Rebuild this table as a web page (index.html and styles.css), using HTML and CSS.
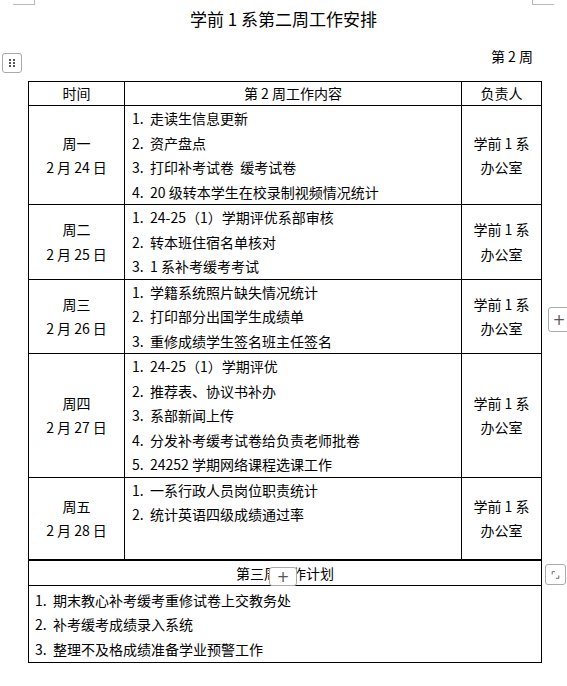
FILE: index.html
```html
<!DOCTYPE html>
<html lang="zh-CN">
<head>
<meta charset="utf-8">
<title>学前1系第二周工作安排</title>
<link rel="stylesheet" href="styles.css">
</head>
<body>
<div class="page">
  <span class="corner corner-tl"></span>
  <span class="corner corner-tr"></span>

  <h1 class="title">学前 1 系第二周工作安排</h1>
  <div class="week">第 2 周</div>

  <div class="move-handle">
    <svg width="8" height="10" viewBox="0 0 8 10"><g fill="#555"><rect x="1" y="1" width="2" height="2"/><rect x="5" y="1" width="2" height="2"/><rect x="1" y="4" width="2" height="2"/><rect x="5" y="4" width="2" height="2"/><rect x="1" y="7" width="2" height="2"/><rect x="5" y="7" width="2" height="2"/></g></svg>
  </div>

  <table class="plan">
    <colgroup>
      <col class="c-time">
      <col class="c-content">
      <col class="c-owner">
    </colgroup>
    <thead>
      <tr class="head">
        <th>时间</th>
        <th>第 2 周工作内容</th>
        <th>负责人</th>
      </tr>
    </thead>
    <tbody>
      <tr>
        <td class="day">周一<br>2 月 24 日</td>
        <td class="items">
          <div class="item"><span class="num">1.</span>走读生信息更新</div>
          <div class="item"><span class="num">2.</span>资产盘点</div>
          <div class="item"><span class="num">3.</span>打印补考试卷&nbsp;&nbsp;缓考试卷</div>
          <div class="item"><span class="num">4.</span>20 级转本学生在校录制视频情况统计</div>
        </td>
        <td class="owner">学前&nbsp;1&nbsp;系<br>办公室</td>
      </tr>
      <tr>
        <td class="day">周二<br>2 月 25 日</td>
        <td class="items">
          <div class="item"><span class="num">1.</span>24-25（1）学期评优系部审核</div>
          <div class="item"><span class="num">2.</span>转本班住宿名单核对</div>
          <div class="item"><span class="num">3.</span>1 系补考缓考考试</div>
        </td>
        <td class="owner">学前&nbsp;1&nbsp;系<br>办公室</td>
      </tr>
      <tr>
        <td class="day">周三<br>2 月 26 日</td>
        <td class="items">
          <div class="item"><span class="num">1.</span>学籍系统照片缺失情况统计</div>
          <div class="item"><span class="num">2.</span>打印部分出国学生成绩单</div>
          <div class="item"><span class="num">3.</span>重修成绩学生签名班主任签名</div>
        </td>
        <td class="owner">学前&nbsp;1&nbsp;系<br>办公室</td>
      </tr>
      <tr>
        <td class="day">周四<br>2 月 27 日</td>
        <td class="items">
          <div class="item"><span class="num">1.</span>24-25（1）学期评优</div>
          <div class="item"><span class="num">2.</span>推荐表、协议书补办</div>
          <div class="item"><span class="num">3.</span>系部新闻上传</div>
          <div class="item"><span class="num">4.</span>分发补考缓考试卷给负责老师批卷</div>
          <div class="item"><span class="num">5.</span>24252 学期网络课程选课工作</div>
        </td>
        <td class="owner">学前&nbsp;1&nbsp;系<br>办公室</td>
      </tr>
      <tr class="last-day">
        <td class="day">周五<br>2 月 28 日</td>
        <td class="items top">
          <div class="item"><span class="num">1.</span>一系行政人员岗位职责统计</div>
          <div class="item"><span class="num">2.</span>统计英语四级成绩通过率</div>
        </td>
        <td class="owner">学前&nbsp;1&nbsp;系<br>办公室</td>
      </tr>
      <tr class="next-head">
        <td colspan="3">第三周工作计划</td>
      </tr>
      <tr class="next-body">
        <td colspan="3">
          <div class="item"><span class="num">1.</span>期末教心补考缓考重修试卷上交教务处</div>
          <div class="item"><span class="num">2.</span>补考缓考成绩录入系统</div>
          <div class="item"><span class="num">3.</span>整理不及格成绩准备学业预警工作</div>
        </td>
      </tr>
    </tbody>
  </table>

  <div class="add-btn add-right">+</div>
  <div class="add-btn add-bottom">+</div>
  <div class="resize-btn">
    <svg width="20" height="20" viewBox="0 0 20 20"><path d="M6.5 9.5V6.5H9.5M13.5 10.5V13.5H10.5" fill="none" stroke="#666" stroke-width="1"/></svg>
  </div>
</div>
</body>
</html>
```

FILE: styles.css
```css
html, body {
  margin: 0;
  padding: 0;
  background: #fff;
}

body {
  font-family: "Noto Sans CJK SC", "Microsoft YaHei", sans-serif;
  color: #000;
  font-size: 14px;
}

.page {
  position: relative;
  width: 567px;
  height: 686px;
  overflow: hidden;
}

.corner {
  position: absolute;
  top: 0;
  width: 21px;
  height: 4px;
  border-bottom: 1px solid #b8b8b8;
}

.corner-tl {
  left: 13px;
  border-right: 1px solid #b8b8b8;
}

.corner-tr {
  left: 532px;
  border-left: 1px solid #b8b8b8;
}

.title {
  margin: 0;
  padding-top: 7px;
  font-size: 17px;
  font-weight: normal;
  line-height: 24px;
  text-align: center;
}

.week {
  margin: 15px 34px 0 0;
  text-align: right;
  font-size: 14px;
  line-height: 20px;
}

.move-handle {
  position: absolute;
  left: 2px;
  top: 53px;
  width: 20px;
  height: 20px;
  box-sizing: border-box;
  border: 1px solid #aaa;
  border-radius: 3px;
  background: #fff;
  display: flex;
  align-items: center;
  justify-content: center;
}

.plan {
  margin: 15px 0 0 28px;
  width: 513px;
  border-collapse: collapse;
  table-layout: fixed;
  line-height: 24.5px;
}

.c-time { width: 96px; }
.c-content { width: 337px; }
.c-owner { width: 80px; }

.plan th,
.plan td {
  border: 1px solid #000;
  padding: 0;
  font-weight: normal;
  vertical-align: middle;
}

.plan th {
  text-align: center;
  line-height: 23px;
  height: 23px;
}

.day,
.owner {
  text-align: center;
}

.plan .items {
  padding-left: 7px;
}

.plan .items.top {
  vertical-align: top;
}

.item {
  white-space: nowrap;
}

.num {
  display: inline-block;
  width: 18px;
}

.last-day td {
  height: 81px;
}

.last-day + .next-head td {
  border-top: 2px solid #000;
}

.plan .next-head td {
  text-align: center;
  line-height: 24px;
  height: 24px;
}

.plan .next-body td {
  padding: 2px 0 1px 6px;
  line-height: 24.5px;
  vertical-align: top;
}

.add-btn {
  position: absolute;
  box-sizing: border-box;
  border: 1px solid #aaa;
  border-radius: 3px;
  background: #fff;
  color: #555;
  font-family: "DejaVu Sans", sans-serif;
  font-size: 15px;
  display: flex;
  align-items: center;
  justify-content: center;
}

.add-right {
  left: 548px;
  top: 307px;
  width: 22px;
  height: 25px;
}

.add-bottom {
  left: 269px;
  top: 567px;
  width: 28px;
  height: 19px;
}

.resize-btn {
  position: absolute;
  left: 545px;
  top: 564px;
  width: 21px;
  height: 21px;
  box-sizing: border-box;
  border: 1px solid #aaa;
  border-radius: 3px;
  background: #fff;
  display: flex;
  align-items: center;
  justify-content: center;
}
```
